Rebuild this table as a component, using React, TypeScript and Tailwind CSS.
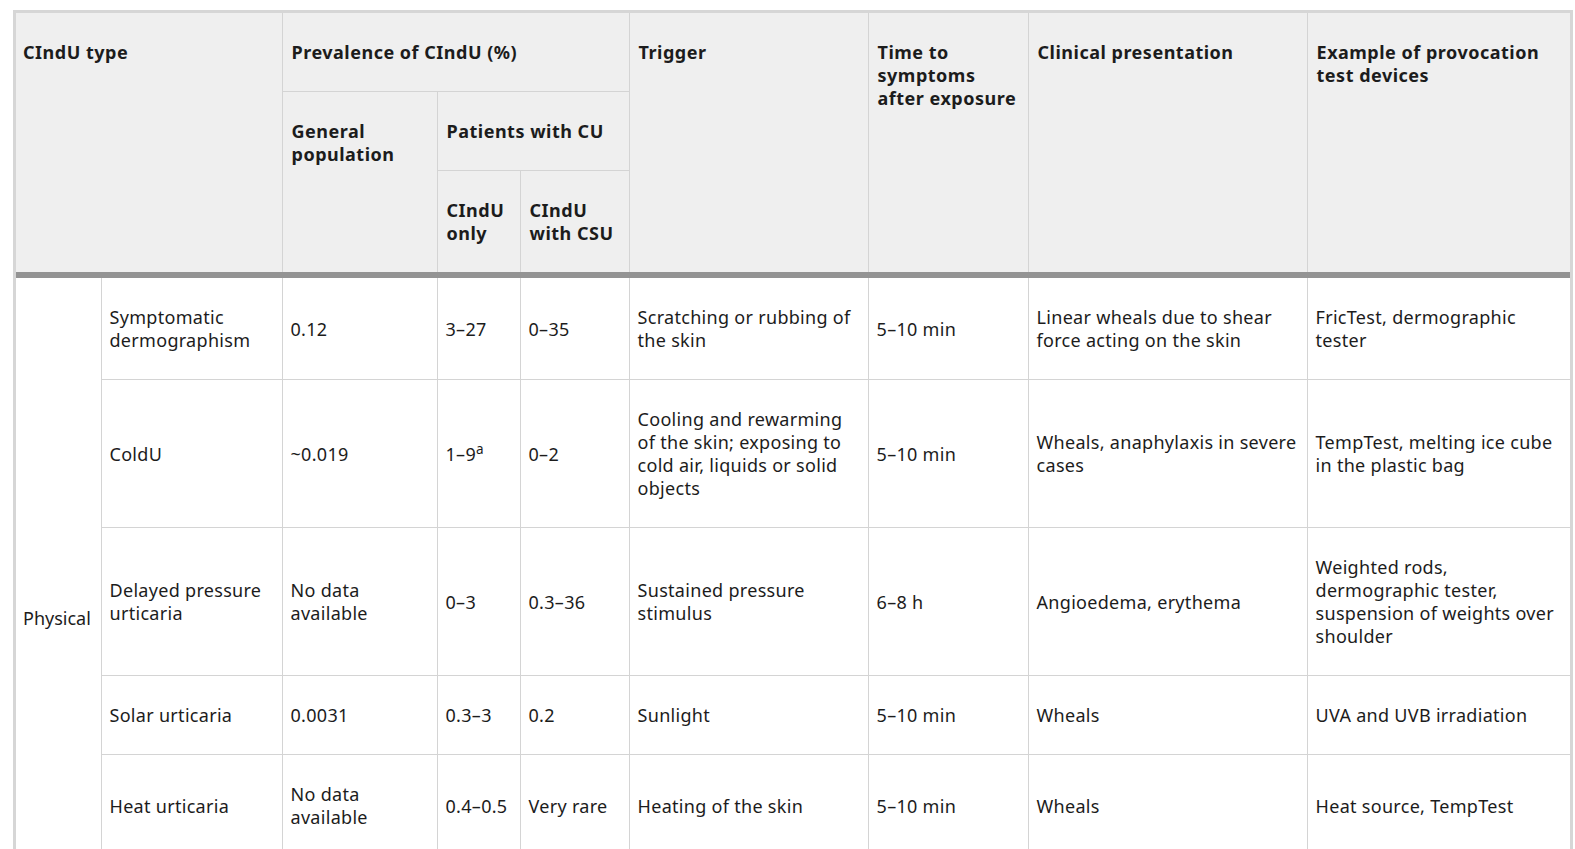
import React from "react";

type Row = {
  sub: string;
  gen: React.ReactNode;
  only: React.ReactNode;
  csu: React.ReactNode;
  trigger: string;
  time: string;
  clinical: string;
  example: string;
};

const rows: Row[] = [
  {
    sub: "Symptomatic dermographism",
    gen: "0.12",
    only: "3–27",
    csu: "0–35",
    trigger: "Scratching or rubbing of the skin",
    time: "5–10 min",
    clinical: "Linear wheals due to shear force acting on the skin",
    example: "FricTest, dermographic tester",
  },
  {
    sub: "ColdU",
    gen: "~0.019",
    only: (
      <>
        1–9<sup>a</sup>
      </>
    ),
    csu: "0–2",
    trigger: "Cooling and rewarming of the skin; exposing to cold air, liquids or solid objects",
    time: "5–10 min",
    clinical: "Wheals, anaphylaxis in severe cases",
    example: "TempTest, melting ice cube in the plastic bag",
  },
  {
    sub: "Delayed pressure urticaria",
    gen: "No data available",
    only: "0–3",
    csu: "0.3–36",
    trigger: "Sustained pressure stimulus",
    time: "6–8 h",
    clinical: "Angioedema, erythema",
    example: "Weighted rods, dermographic tester, suspension of weights over shoulder",
  },
  {
    sub: "Solar urticaria",
    gen: "0.0031",
    only: "0.3–3",
    csu: "0.2",
    trigger: "Sunlight",
    time: "5–10 min",
    clinical: "Wheals",
    example: "UVA and UVB irradiation",
  },
  {
    sub: "Heat urticaria",
    gen: "No data available",
    only: "0.4–0.5",
    csu: "Very rare",
    trigger: "Heating of the skin",
    time: "5–10 min",
    clinical: "Wheals",
    example: "Heat source, TempTest",
  },
  {
    sub: "Vibratory angioedema",
    gen: "No data available",
    only: "No data",
    csu: "No data",
    trigger: "Vibration",
    time: "5–10 min",
    clinical: "Angioedema",
    example: "Vortex mixer",
  },
];

const th =
  "bg-[#efefef] border border-[#d4d4d4] align-top text-left font-bold tracking-[0.5px] pl-[9px] pr-[8px] pt-[28px] pb-[27px]";
const td =
  "border border-[#d4d4d4] align-middle text-left font-normal pl-[8px] pr-[5px] pt-[28px] pb-[27px]";

export default function App() {
  return (
    <div className="h-screen overflow-hidden bg-white font-['Noto_Sans',sans-serif] text-[18px] leading-[23px] tracking-[0.3px] text-[#1c1c1c]">
      <div className="ml-[13px] mt-[10px] w-[1560px] border-[3px] border-b-0 border-[#d6d6d6]">
        <table className="w-[1554px] table-fixed border-collapse border-hidden">
          <colgroup>
            <col className="w-[85px]" />
            <col className="w-[181px]" />
            <col className="w-[155px]" />
            <col className="w-[83px]" />
            <col className="w-[109px]" />
            <col className="w-[239px]" />
            <col className="w-[160px]" />
            <col className="w-[279px]" />
            <col className="w-[263px]" />
          </colgroup>
          <thead className="border-b-[6px] border-[#939393]">
            <tr>
              <th
                className="bg-[#efefef] border border-[#d4d4d4] align-top text-left font-bold tracking-[0.5px] pl-[7px] pr-[8px] pt-[28px] pb-[27px]"
                colSpan={2}
                rowSpan={3}
              >
                CIndU type
              </th>
              <th className={th} colSpan={3}>
                Prevalence of CIndU (%)
              </th>
              <th className={th} rowSpan={3}>
                Trigger
              </th>
              <th className={th} rowSpan={3}>
                Time to symptoms after exposure
              </th>
              <th className={th} rowSpan={3}>
                Clinical presentation
              </th>
              <th className={th} rowSpan={3}>
                Example of provocation test devices
              </th>
            </tr>
            <tr>
              <th className={th} rowSpan={2}>
                General population
              </th>
              <th className={th} colSpan={2}>
                Patients with CU
              </th>
            </tr>
            <tr>
              <th className={th}>CIndU only</th>
              <th className={th}>CIndU with CSU</th>
            </tr>
          </thead>
          <tbody>
            {rows.map((r, i) => (
              <tr key={r.sub}>
                {i === 0 && (
                  <td
                    className="border border-[#d4d4d4] align-middle text-left pl-[7px] pr-[1px] tracking-normal"
                    rowSpan={rows.length}
                  >
                    Physical
                  </td>
                )}
                <td className={td}>{r.sub}</td>
                <td className={td}>{r.gen}</td>
                <td className={td}>{r.only}</td>
                <td className={td}>{r.csu}</td>
                <td className={td}>{r.trigger}</td>
                <td className={td}>{r.time}</td>
                <td className={td}>{r.clinical}</td>
                <td className={td}>{r.example}</td>
              </tr>
            ))}
          </tbody>
        </table>
      </div>
    </div>
  );
}
